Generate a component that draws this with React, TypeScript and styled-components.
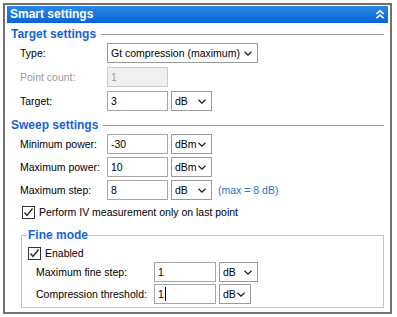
import styled, { createGlobalStyle } from "styled-components";

const GlobalStyle = createGlobalStyle`
    body {
        margin: 0;
        background: #ffffff;
        font-family: "Liberation Sans", Arial, sans-serif;
        font-size: 10.5px;
        color: #000000;
    }
`;

const Panel = styled.div`
    width: 389px;
    margin: 3px 0 0 3px;
    box-sizing: border-box;
    border: 2px solid #707070;
    padding: 1px 2px 0 2px;
    background: #ffffff;
`;

const Header = styled.div`
    height: 17px;
    display: flex;
    align-items: center;
    justify-content: space-between;
    padding: 0 4px 0 3px;
    background: linear-gradient(#2b88e6, #0a63d6);
    color: #ffffff;
`;

const HeaderTitle = styled.span`
    font-weight: bold;
    font-size: 12px;
    line-height: 17px;
`;

const Body = styled.div`
    padding: 4px;
`;

const SectionTitle = styled.div<{ $gap?: number }>`
    display: flex;
    align-items: center;
    height: 14px;
    margin-top: ${(p) => p.$gap ?? 0}px;
    margin-bottom: 2px;
    color: #1762d8;
    font-weight: bold;
    font-size: 12px;
    line-height: 14px;
`;

const Rule = styled.div`
    flex: 1;
    height: 1px;
    margin-left: 5px;
    margin-top: 1px;
    background: #a3a3a3;
`;

const Form = styled.div<{ $label: number; $gap: number; $indent: number }>`
    display: grid;
    grid-template-columns: ${(p) => p.$label}px auto;
    grid-auto-rows: 20px;
    row-gap: ${(p) => p.$gap}px;
    align-items: center;
    padding-left: ${(p) => p.$indent}px;
`;

const Label = styled.span<{ $disabled?: boolean }>`
    color: ${(p) => (p.$disabled ? "#9b9b9b" : "#000000")};
    white-space: nowrap;
`;

const Controls = styled.div`
    display: flex;
    align-items: center;
    gap: 3px;
    height: 100%;
`;

const TextBox = styled.div<{ $width: number; $disabled?: boolean }>`
    width: ${(p) => p.$width}px;
    height: 100%;
    box-sizing: border-box;
    display: flex;
    align-items: center;
    padding-left: 3px;
    border: 1px solid ${(p) => (p.$disabled ? "#cccccc" : "#a5a5a5")};
    background: ${(p) => (p.$disabled ? "#f0f0f0" : "#ffffff")};
    color: ${(p) => (p.$disabled ? "#9b9b9b" : "#000000")};
`;

const Caret = styled.span`
    display: inline-block;
    width: 1px;
    height: 14px;
    margin-left: 1px;
    background: #000000;
`;

const Combo = styled.div<{ $width: number }>`
    width: ${(p) => p.$width}px;
    height: 100%;
    box-sizing: border-box;
    display: flex;
    align-items: center;
    justify-content: space-between;
    padding: 0 5px 0 3px;
    border: 1px solid #9a9a9a;
    background: #ffffff;
    white-space: nowrap;
`;

const Hint = styled.span`
    color: #1f6fd6;
    margin-left: 3px;
    white-space: nowrap;
`;

const CheckRow = styled.label<{ $top: number; $indent: number }>`
    display: flex;
    align-items: center;
    gap: 4px;
    height: 16px;
    margin-top: ${(p) => p.$top}px;
    padding-left: ${(p) => p.$indent}px;
`;

const Box = styled.span`
    width: 13px;
    height: 13px;
    box-sizing: border-box;
    border: 1px solid #333333;
    background: #ffffff;
    display: flex;
    align-items: center;
    justify-content: center;
`;

const Group = styled.fieldset`
    margin: 8px 0 0 10px;
    padding: 0 0 3px 6px;
    border: 1px solid #c4c4c4;
    min-width: 0;
`;

const Legend = styled.legend`
    margin-left: -1px;
    padding: 0 1px;
    color: #1762d8;
    font-weight: bold;
    font-size: 12px;
    line-height: 14px;
`;

const FineForm = styled(Form)`
    margin-top: 1px;
`;

function Chevron() {
    return (
        <svg width="8" height="5" viewBox="0 0 8 5">
            <polyline points="0.5,0.8 4,4.2 7.5,0.8" fill="none" stroke="#1a1a1a" strokeWidth="1.2" />
        </svg>
    );
}

function CollapseIcon() {
    return (
        <svg width="8" height="9" viewBox="0 0 8 9">
            <polyline points="0.5,4 4,0.8 7.5,4" fill="none" stroke="#ffffff" strokeWidth="1.6" />
            <polyline points="0.5,8.2 4,5 7.5,8.2" fill="none" stroke="#ffffff" strokeWidth="1.6" />
        </svg>
    );
}

function Check() {
    return (
        <svg width="11" height="11" viewBox="0 0 11 11">
            <polyline points="1.5,5.5 4,8.5 9.5,1.5" fill="none" stroke="#222222" strokeWidth="1.3" />
        </svg>
    );
}

function Select({ width, value }: { width: number; value: string }) {
    return (
        <Combo $width={width}>
            <span>{value}</span>
            <Chevron />
        </Combo>
    );
}

export default function App() {
    return (
        <>
            <GlobalStyle />
            <Panel>
                <Header>
                    <HeaderTitle>Smart settings</HeaderTitle>
                    <CollapseIcon />
                </Header>
                <Body>
                    <SectionTitle>
                        <span>Target settings</span>
                        <Rule />
                    </SectionTitle>
                    <Form $label={87} $gap={4} $indent={9}>
                        <Label>Type:</Label>
                        <Controls>
                            <Select width={151} value="Gt compression (maximum)" />
                        </Controls>
                        <Label $disabled>Point count:</Label>
                        <Controls>
                            <TextBox $width={61} $disabled>1</TextBox>
                        </Controls>
                        <Label>Target:</Label>
                        <Controls>
                            <TextBox $width={61}>3</TextBox>
                            <Select width={41} value="dB" />
                        </Controls>
                    </Form>

                    <SectionTitle $gap={7}>
                        <span>Sweep settings</span>
                        <Rule />
                    </SectionTitle>
                    <Form $label={87} $gap={3} $indent={9}>
                        <Label>Minimum power:</Label>
                        <Controls>
                            <TextBox $width={61}>-30</TextBox>
                            <Select width={41} value="dBm" />
                        </Controls>
                        <Label>Maximum power:</Label>
                        <Controls>
                            <TextBox $width={61}>10</TextBox>
                            <Select width={41} value="dBm" />
                        </Controls>
                        <Label>Maximum step:</Label>
                        <Controls>
                            <TextBox $width={61}>8</TextBox>
                            <Select width={41} value="dB" />
                            <Hint>(max = 8 dB)</Hint>
                        </Controls>
                    </Form>
                    <CheckRow $top={4} $indent={11}>
                        <Box><Check /></Box>
                        <span>Perform IV measurement only on last point</span>
                    </CheckRow>

                    <Group>
                        <Legend>Fine mode</Legend>
                        <CheckRow $top={3} $indent={0}>
                            <Box><Check /></Box>
                            <span>Enabled</span>
                        </CheckRow>
                        <FineForm $label={118} $gap={2} $indent={8}>
                            <Label>Maximum fine step:</Label>
                            <Controls>
                                <TextBox $width={62}>1</TextBox>
                                <Select width={39} value="dB" />
                            </Controls>
                            <Label>Compression threshold:</Label>
                            <Controls>
                                <TextBox $width={62}>1<Caret /></TextBox>
                                <Select width={32} value="dB" />
                            </Controls>
                        </FineForm>
                    </Group>
                </Body>
            </Panel>
        </>
    );
}
